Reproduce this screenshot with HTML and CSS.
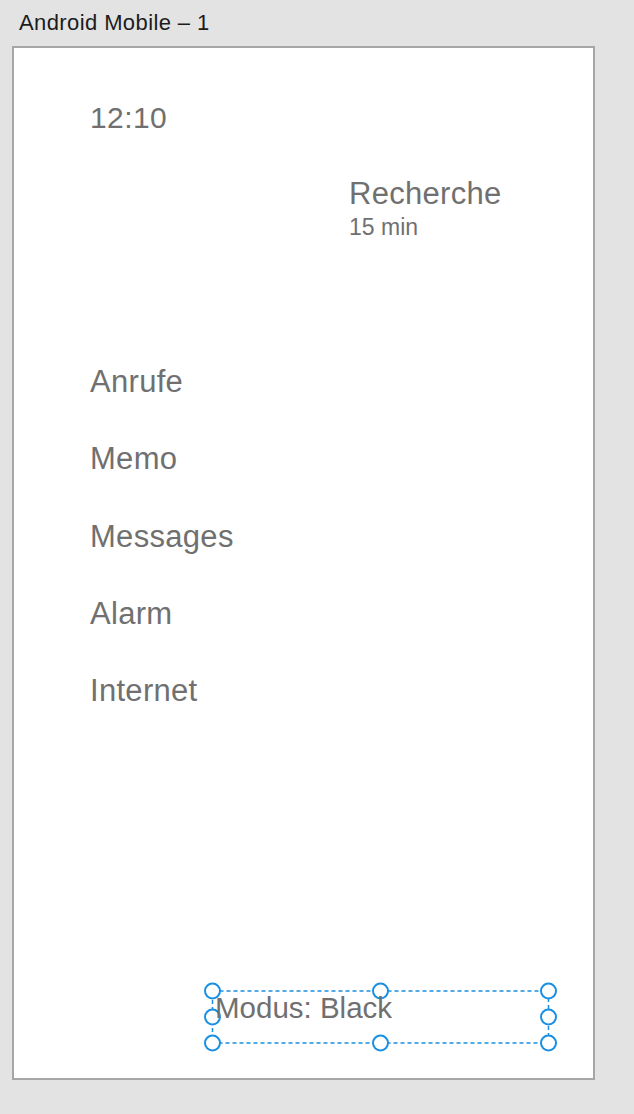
FILE: index.html
```html
<!DOCTYPE html>
<html>
<head>
<meta charset="utf-8">
<link rel="stylesheet" href="styles.css">
</head>
<body>
<div class="artboard-title">Android Mobile – 1</div>
<div class="artboard">
  <div class="time">12:10</div>
  <div class="task">
    <div class="task-name">Recherche</div>
    <div class="task-dur">15 min</div>
  </div>
  <ul class="menu">
    <li>Anrufe</li>
    <li>Memo</li>
    <li>Messages</li>
    <li>Alarm</li>
    <li>Internet</li>
  </ul>
  <div class="spacer"></div>
  <div class="mode">
    <svg class="selection" width="362" height="78" viewBox="0 0 362 78">
      <rect x="12.5" y="13" width="336" height="52" fill="none" stroke="#1b8fe2" stroke-width="1.5" stroke-dasharray="4 3"/>
      <g fill="#ffffff" stroke="#1b8fe2" stroke-width="2">
        <circle cx="12.5" cy="13" r="7.5"/>
        <circle cx="180.5" cy="13" r="7.5"/>
        <circle cx="348.5" cy="13" r="7.5"/>
        <circle cx="12.5" cy="39" r="7.5"/>
        <circle cx="348.5" cy="39" r="7.5"/>
        <circle cx="12.5" cy="65" r="7.5"/>
        <circle cx="180.5" cy="65" r="7.5"/>
        <circle cx="348.5" cy="65" r="7.5"/>
      </g>
    </svg>
    <span class="mode-text">Modus: Black</span>
  </div>
</div>
</body>
</html>
```
FILE: styles.css
```css
html, body {
  margin: 0;
  padding: 0;
}
body {
  background: #e3e3e3;
  width: 634px;
  height: 1114px;
  font-family: "Liberation Sans", Arial, sans-serif;
}
.artboard-title {
  padding: 12px 0 0 19px;
  height: 22px;
  line-height: 22px;
  font-size: 22px;
  letter-spacing: 0.4px;
  color: #1c1c1c;
  margin-bottom: 12px;
}
.artboard {
  margin-left: 12px;
  height: 1030px;
  border: 2px solid #a6a6a6;
  background: #ffffff;
  display: flex;
  flex-direction: column;
  padding-left: 76px;
  box-sizing: content-box;
  width: 503px;
  color: #707070;
}
.time {
  margin-top: 55px;
  font-size: 30px;
  line-height: 30px;
  letter-spacing: 0.4px;
}
.task {
  margin-top: 45px;
  margin-left: 259px;
}
.task-name {
  font-size: 31px;
  line-height: 31px;
  letter-spacing: 0.3px;
}
.task-dur {
  margin-top: 7px;
  font-size: 23px;
  line-height: 23px;
}
.menu {
  list-style: none;
  margin: 127px 0 0 0;
  padding: 0;
  display: flex;
  flex-direction: column;
  gap: 46.3px;
}
.menu li {
  font-size: 31px;
  line-height: 31px;
  letter-spacing: 0.3px;
}
.spacer {
  flex: 1;
}
.mode {
  position: relative;
  margin-left: 125px;
  margin-bottom: 55px;
  height: 30px;
}
.mode-text {
  position: relative;
  display: block;
  font-size: 29.5px;
  line-height: 30px;
}
.selection {
  position: absolute;
  left: -15px;
  top: -14.6px;
}
```
